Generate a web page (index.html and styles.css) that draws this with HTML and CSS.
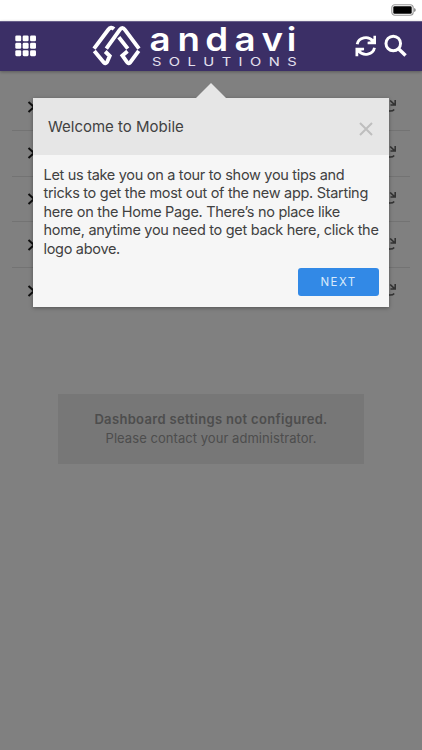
FILE: index.html
```html
<!DOCTYPE html>
<html lang="en">
<head>
<meta charset="utf-8">
<title>Andavi Solutions</title>
<link rel="stylesheet" href="styles.css">
</head>
<body>
<svg width="0" height="0" class="defs">
  <symbol id="refresh" viewBox="0 0 22 22"><path d="M2.2 9.2A8.9 8.2 0 0 1 18 5.8M19.8 12.8A8.9 8.2 0 0 1 4 16.2" fill="none" stroke="currentColor" stroke-width="2.9"/><path d="M21.5 .5V9.2h-8.7V6.6l3.5-.4 2.4-2.6V.5zM.5 21.5v-8.7h8.7v2.6l-3.5.4-2.4 2.6v3.1z" fill="currentColor"/></symbol>
  <symbol id="mini" viewBox="0 0 10 14"><path d="M8.2 1v5H3.5M3.2 1.5L7.8 5.8M1 11.8Q5.5 12.6 7.2 10.4" fill="none" stroke="currentColor" stroke-width="1.6"/></symbol>
</svg>
<div class="status">
  <svg width="26" height="12" viewBox="0 0 26 12"><rect x=".8" y=".8" width="21.4" height="10.4" rx="3" fill="#fff" stroke="#999" stroke-width="1.1"/><rect x="2.3" y="2.3" width="18.4" height="7.4" rx="1.3"/><path d="M23.2 4q1.5.5 1.5 2t-1.5 2z" fill="#777"/></svg>
</div>
<header class="bar">
  <svg class="grid" width="22" height="22" viewBox="0 0 22 22" fill="#fff"><rect x=".3" y=".3" width="6" height="6" rx="1.3"/><rect x="7.8" y=".3" width="6" height="6" rx="1.3"/><rect x="15.3" y=".3" width="6" height="6" rx="1.3"/><rect x=".3" y="7.8" width="6" height="6" rx="1.3"/><rect x="7.8" y="7.8" width="6" height="6" rx="1.3"/><rect x="15.3" y="7.8" width="6" height="6" rx="1.3"/><rect x=".3" y="15.3" width="6" height="6" rx="1.3"/><rect x="7.8" y="15.3" width="6" height="6" rx="1.3"/><rect x="15.3" y="15.3" width="6" height="6" rx="1.3"/></svg>
  <svg class="logo" width="210" height="50" viewBox="90 21 210 50">
    <g fill="none" stroke="#fff" stroke-width="3.9">
      <path d="M94 48.6L108.2 29.8Q111 26.2 114 29M106.3 48.6L119.7 29.8Q122.3 26.2 125 29.8L139 48.6M118.8 37.3L127.8 48.6"/>
      <path d="M94.3 50.9L104 62.7Q105.5 64.2 107 62.2L109.7 56L105.2 51.5M138.7 50.9L130 62.7Q128.5 64.2 127 62.2L122.4 55.5L127.5 51.3"/>
    </g>
    <text class="word" transform="translate(149 51.3) scale(1.13 1)" x="0.5 25.2 49.7 75.7 99.6 121.9">andavi</text>
    <text class="sub" transform="translate(152 66.2) scale(1.28 1)" textLength="113">SOLUTIONS</text>
  </svg>
  <svg class="sync" width="22" height="22"><use href="#refresh"/></svg>
  <svg class="search" width="24" height="24" viewBox="0 0 24 24" fill="none" stroke="#fff"><circle cx="9.4" cy="9.4" r="7.4" stroke-width="3"/><path d="M14.7 14.7l7.2 7" stroke-width="3.5"/></svg>
</header>
<main class="page">
  <ul class="rows">
    <li><svg width="9" height="14"><path d="M1.5 2l5.5 5-5.5 5"/></svg><svg class="mini" width="10" height="14"><use href="#mini"/></svg></li>
    <li><svg width="9" height="14"><path d="M1.5 2l5.5 5-5.5 5"/></svg><svg class="mini" width="10" height="14"><use href="#mini"/></svg></li>
    <li><svg width="9" height="14"><path d="M1.5 2l5.5 5-5.5 5"/></svg><svg class="mini" width="10" height="14"><use href="#mini"/></svg></li>
    <li><svg width="9" height="14"><path d="M1.5 2l5.5 5-5.5 5"/></svg><svg class="mini" width="10" height="14"><use href="#mini"/></svg></li>
    <li><svg width="9" height="14"><path d="M1.5 2l5.5 5-5.5 5"/></svg><svg class="mini" width="10" height="14"><use href="#mini"/></svg></li>
  </ul>
  <div class="notice"><strong>Dashboard settings not configured.</strong><span>Please contact your administrator.</span></div>
</main>
<section class="tour">
  <div class="tour-head"><h1>Welcome to Mobile</h1><svg width="14" height="14" viewBox="0 0 14 14"><path d="M1 1l12 12M13 1L1 13" stroke="#bebebe" stroke-width="2"/></svg></div>
  <p>Let us take you on a tour to show you tips and<br>tricks to get the most out of the new app. Starting<br>here on the Home Page. There’s no place like<br>home, anytime you need to get back here, click the<br>logo above.</p>
  <button>NEXT</button>
</section>
</body>
</html>
```
FILE: styles.css
```css
* { box-sizing: border-box; }
body { margin: 0; height: 750px; overflow: hidden; background: #808080; font-family: Inter, sans-serif; position: relative; }
.defs { position: absolute; }
.status { height: 21px; background: #fff; display: flex; justify-content: flex-end; padding: 4px 5px 0 0; }
.bar { height: 50px; background: #3b2f66; border-top: 1px solid #68608a; display: flex; align-items: center; padding: 0 14px 1px 15px; color: #fff; box-shadow: 0 1px 3px rgba(0,0,0,.3); }
.logo { margin-left: 53px; overflow: visible; }
.sync { margin-left: 55px; }
.search { margin-left: 8px; }
.word { font: 600 32.5px Inter, sans-serif; fill: #fff; }
.sub { font: 400 11.5px Inter, sans-serif; fill: #e4e0ee; }
.rows { list-style: none; margin: 0 12px; padding: 14px 0 0; }
.rows li { height: 45.8px; display: flex; align-items: center; justify-content: space-between; padding: 0 13px 0 15px; border-bottom: 1px solid #737373; }
.rows li:last-child { border: 0; }
.rows path { fill: none; }
.rows li > svg:first-child { stroke: #101010; stroke-width: 2; }
.mini { color: #333; margin-top: -2px; }
.notice { width: 306px; height: 70px; margin: 80px 0 0 58px; padding-top: 1px; background: #777; color: #4d4d4d; display: flex; flex-direction: column; align-items: center; justify-content: center; font-size: 13px; line-height: 19.5px; }
.notice strong { font-weight: 600; letter-spacing: .33px; }
.notice span { letter-spacing: .05px; }
.tour { position: absolute; left: 33px; top: 98px; width: 356px; height: 209px; background: #f6f6f6; color: #414141; box-shadow: 0 1px 4px rgba(0,0,0,.35); display: flex; flex-direction: column; }
.tour::before { content: ""; position: absolute; left: 163px; top: -15px; border: 15px solid transparent; border-top: 0; border-bottom-color: #e6e6e6; }
.tour-head { height: 57px; background: #e6e6e6; display: flex; align-items: center; justify-content: space-between; padding: 0 16px 0 15px; }
.tour-head svg { margin-top: 4px; }
h1 { margin: 0; font-size: 15px; font-weight: 400; }
p { margin: 11px 0 0 10.5px; font-size: 14.5px; line-height: 18.4px; letter-spacing: -.3px; white-space: nowrap; }
button { width: 81px; height: 28px; margin: 10px 10px 0 auto; padding: 0; border: 0; border-radius: 3px; background: #3289e6; color: #d8e9fb; font: 400 11.5px Inter, sans-serif; letter-spacing: 1.4px; }
```
